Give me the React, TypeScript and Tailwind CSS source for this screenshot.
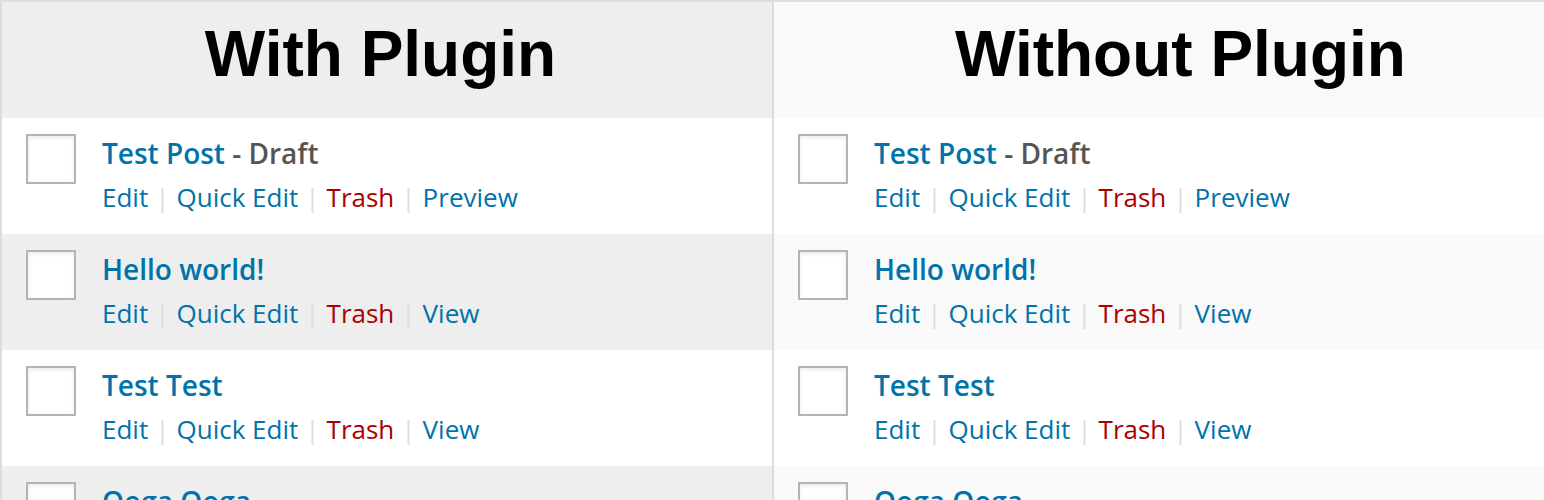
type Post = {
    title: string
    draft?: boolean
    last: string
}

const posts: Post[] = [
    { title: "Test Post", draft: true, last: "Preview" },
    { title: "Hello world!", last: "View" },
    { title: "Test Test", last: "View" },
    { title: "Ooga Ooga", last: "View" },
]

function Sep() {
    return <span className="px-[7px] text-[#dddddd]">|</span>
}

function Row({ post, shaded, shade }: { post: Post; shaded: boolean; shade: string }) {
    return (
        <div className={`flex h-[116px] shrink-0 pl-6 ${shaded ? shade : "bg-white"}`}>
            <div className="mt-4 h-[50px] w-[50px] shrink-0 border-2 border-[#b4b4b4] bg-white shadow-[inset_0_2px_4px_rgba(0,0,0,0.08)]" />
            <div className="ml-[26px] pt-[13px] font-['Open_Sans',sans-serif]">
                <div className="text-[28px] leading-[44px] font-semibold text-[#0073aa]">
                    {post.title}
                    {post.draft && <span className="text-[#555555]"> - Draft</span>}
                </div>
                <div className="flex text-[26px] leading-[44px] text-[#0073aa]">
                    <span>Edit</span>
                    <Sep />
                    <span>Quick Edit</span>
                    <Sep />
                    <span className="text-[#aa0000]">Trash</span>
                    <Sep />
                    <span>{post.last}</span>
                </div>
            </div>
        </div>
    )
}

function Panel({ label, head, shade, offset }: { label: string; head: string; shade: string; offset: string }) {
    return (
        <div className="flex min-w-0 flex-1 flex-col">
            <div className={`flex h-[116px] shrink-0 items-center justify-center ${head}`}>
                <h2 className={`mb-[12px] font-['Liberation_Sans',Arial,sans-serif] text-[64px] leading-none font-bold text-black ${offset}`}>
                    {label}
                </h2>
            </div>
            {posts.map((p, i) => (
                <Row key={p.title} post={p} shaded={i % 2 === 1} shade={shade} />
            ))}
        </div>
    )
}

export default function App() {
    return (
        <div className="h-[500px] w-[1544px] overflow-hidden border-t-2 border-l-2 border-[#dddddd] bg-white">
            <div className="flex h-full">
                <Panel label="With Plugin" head="bg-[#eeeeee]" shade="bg-[#eeeeee]" offset="mr-[13px]" />
                <div className="w-[2px] shrink-0 bg-[#dddddd]" />
                <Panel label="Without Plugin" head="bg-[#f9f9f9]" shade="bg-[#f9f9f9]" offset="ml-[43px]" />
            </div>
        </div>
    )
}
